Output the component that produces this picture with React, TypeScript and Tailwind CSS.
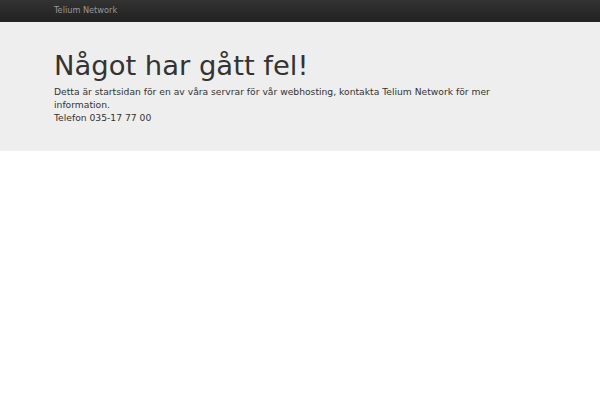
export default function App() {
  return (
    <div className="min-h-[400px] bg-white font-['DejaVu_Sans',sans-serif] text-[#333]">
      <div className="h-[22px] bg-gradient-to-b from-[#333333] to-[#222222] border-b border-[#252525]">
        <div className="w-[492px] mx-auto flex items-center h-full">
          <span className="text-[8.2px] text-[#999]">Telium Network</span>
        </div>
      </div>
      <div className="bg-[#eeeeee] h-[129px]">
        <div className="w-[492px] mx-auto pt-[28px]">
          <h1 className="text-[27.4px] leading-[32px] text-[#333]">Något har gått fel!</h1>
          <p className="text-[9.2px] leading-[13px] mt-[3px] text-[#333]">
            Detta är startsidan för en av våra servrar för vår webhosting, kontakta Telium Network för mer information.
            <br />
            Telefon 035-17 77 00
          </p>
        </div>
      </div>
    </div>
  )
}
